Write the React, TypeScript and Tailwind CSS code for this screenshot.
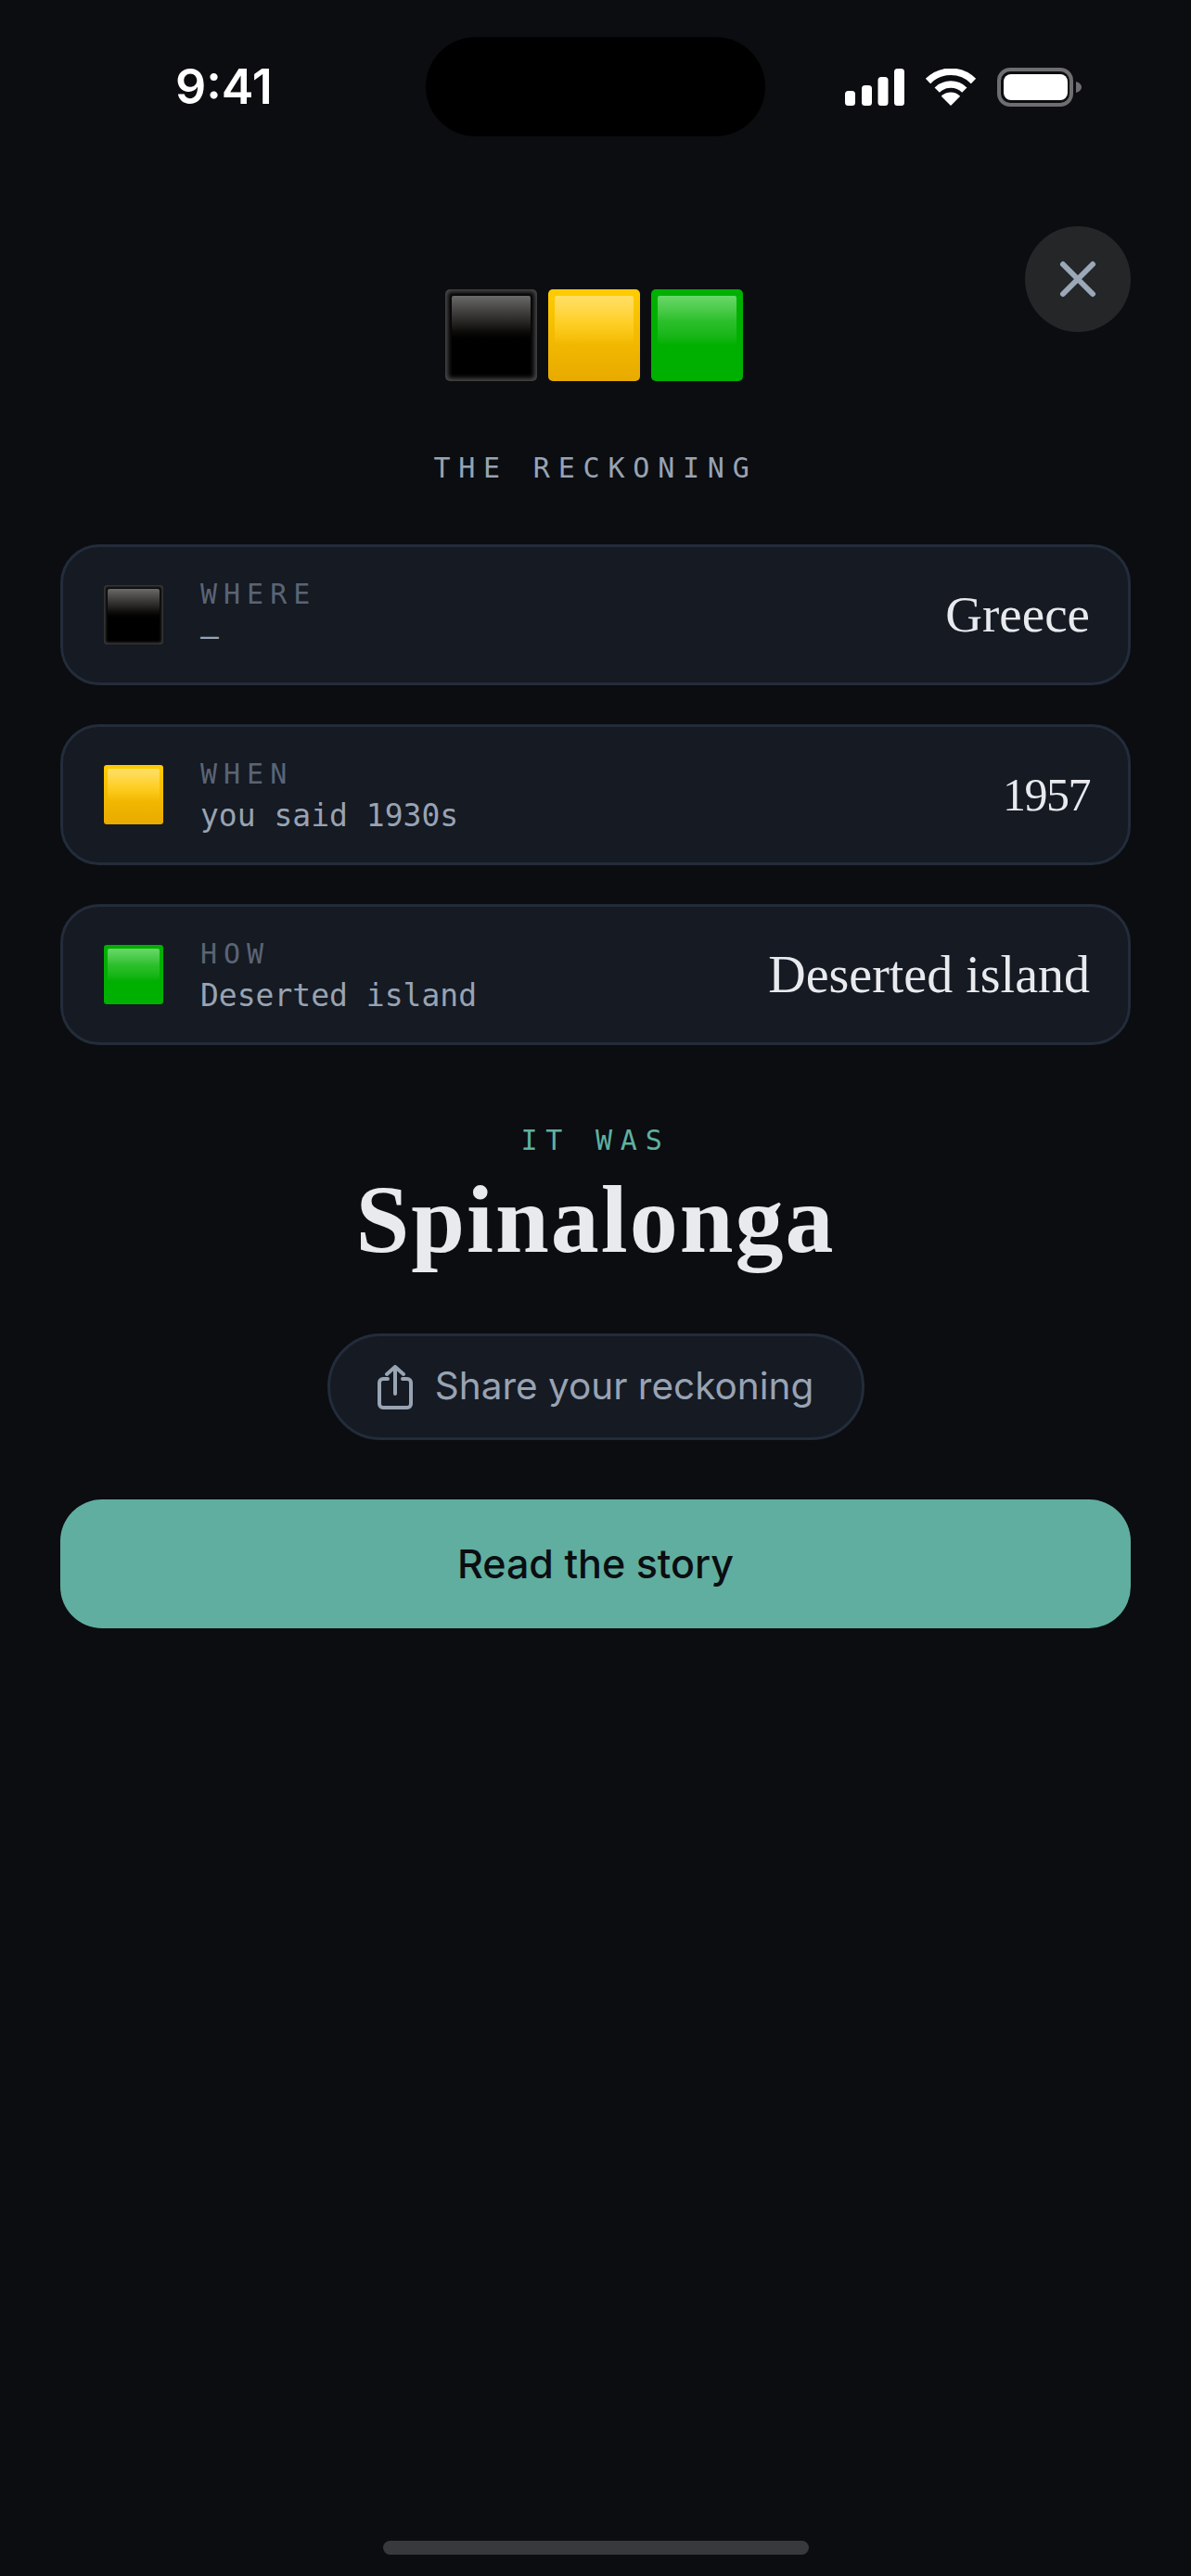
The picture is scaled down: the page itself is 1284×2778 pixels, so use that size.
import React from "react";

const mono = "font-['DejaVu_Sans_Mono',monospace]";
const serif = "font-['Liberation_Serif',serif]";

const rows = [
  { key: "where", label: "WHERE", sub: "—", value: "Greece", tile: "black", size: "text-[55px]" },
  { key: "when", label: "WHEN", sub: "you said 1930s", value: "1957", tile: "yellow", size: "text-[50px] tracking-[-1.500px]" },
  { key: "how", label: "HOW", sub: "Deserted island", value: "Deserted island", tile: "green", size: "text-[56px]" },
];

// emoji-like squares, outer body plus a glossy top
function Tile({ color, small }: { color: string; small?: boolean }) {
  const size = small
    ? "w-[64px] h-[64px] p-[4px] rounded-[3px]"
    : "w-[99px] h-[99px] p-[7px] rounded-[5px]";
  const body =
    color === "black"
      ? small
        ? "bg-black shadow-[inset_0_0_3px_2px_#3c3c3c]"
        : "bg-black shadow-[inset_0_0_5px_3px_#4a4a4a]"
      : color === "yellow"
        ? "bg-gradient-to-b from-[#ffcc00] to-[#e8aa00]"
        : "bg-[#00b000]";
  const gloss =
    color === "black"
      ? "from-[#6a6a6a] via-[#2c2a28] to-black"
      : color === "yellow"
        ? "from-[#ffe064] via-[#ffd02a] to-transparent"
        : "from-[#68d868] via-[#2cc02c] to-[#00b000]";
  return (
    <div className={`${size} ${body} shrink-0`}>
      <div className={`h-[62%] rounded-t-[2px] bg-gradient-to-b ${gloss}`} />
    </div>
  );
}

function StatusIcons() {
  return (
    <div className="flex items-center">
      <svg width="64" height="40" viewBox="0 0 64 40" fill="#fff">
        <rect x="0" y="24" width="11" height="16" rx="3.5" />
        <rect x="18" y="18" width="11" height="22" rx="3.5" />
        <rect x="35.5" y="9" width="11" height="31" rx="3.5" />
        <rect x="53" y="0" width="11" height="40" rx="3.5" />
      </svg>
      <svg className="ml-[22px]" width="56" height="40" viewBox="0 0 56 40" fill="none" stroke="#fff" strokeWidth="7.5">
        <path d="M3.5 13.5a34.6 34.6 0 0 1 49 0" />
        <path d="M13.2 23.2a21 21 0 0 1 29.6 0" />
        <path d="M28 40 17.8 29.8a14.4 14.4 0 0 1 20.4 0Z" fill="#fff" stroke="none" />
      </svg>
      <svg className="ml-[22px]" width="91" height="42" viewBox="0 0 91 42" fill="none">
        <rect x="2" y="2" width="78" height="38" rx="12" stroke="#6e6e70" strokeWidth="4" />
        <rect x="7" y="7" width="69" height="28" rx="8" fill="#fff" />
        <path d="M85 15c3.5 1 6 3.200 6 6s-2.500 5-6 6Z" fill="#6e6e70" />
      </svg>
    </div>
  );
}

export default function App() {
  return (
    <div className="relative flex min-h-[2778px] w-[1284px] flex-col bg-[#0b0d11] font-['Inter',sans-serif]">
      {/* status bar */}
      <div className="flex h-[147px] items-end">
        <div className="flex h-[107px] w-full items-center">
          <div className="w-[459px] pl-[189px] text-[52px] leading-[60px] font-semibold text-white">9:41</div>
          <div className="h-[107px] w-[366px] rounded-[54px] bg-black" />
          <div className="ml-[86px]">
            <StatusIcons />
          </div>
        </div>
      </div>

      <button className="absolute top-[244px] left-[1105px] flex h-[114px] w-[114px] items-center justify-center rounded-full bg-[#252628]">
        <svg width="42" height="42" viewBox="0 0 42 42" fill="none" stroke="#9aa8b8" strokeWidth="6" strokeLinecap="round">
          <path d="M5 5 37 37M37 5 5 37" />
        </svg>
      </button>

      {/* result tiles */}
      <div className="mt-[165px] flex justify-center gap-[12px] pr-[3px]">
        <Tile color="black" />
        <Tile color="yellow" />
        <Tile color="green" />
      </div>

      <div className={`${mono} mt-[74px] text-center text-[30px] leading-[40px] tracking-[8.800px] text-[#98a3b3]`}>
        THE RECKONING
      </div>

      <div className="mx-[65px] mt-[62px] flex flex-col gap-[42px]">
        {rows.map((r) => (
          <div
            key={r.key}
            className="flex h-[152px] items-center rounded-[42px] border-[3px] border-[#232c3a] bg-[#151a23] pr-[41px] pl-[44px]"
          >
            <Tile color={r.tile} small />
            <div className={`${mono} ml-[40px] flex flex-col pt-[1px]`}>
              <span className="text-[30px] leading-[40px] tracking-[7px] text-[#5a6474]">{r.label}</span>
              <span className="mt-[4px] text-[33px] leading-[42px] text-[#98a3b3]">{r.sub}</span>
            </div>
            <div className={`${serif} ${r.size} ml-auto leading-[64px] text-[#e8eaee]`}>{r.value}</div>
          </div>
        ))}
      </div>

      <div className={`${mono} mt-[83px] text-center text-[30px] leading-[40px] tracking-[8.800px] text-[#5fb0a0]`}>
        IT WAS
      </div>
      <div className={`${serif} mt-[10px] text-center text-[104px] leading-[110px] font-bold tracking-[2px] text-[#e8eaee]`}>
        Spinalonga
      </div>

      <div className="mt-[68px] flex justify-center">
        <button className="flex h-[115px] w-[579px] items-center justify-center gap-[24px] rounded-full border-[3px] border-[#232c3a] bg-[#151a23] text-[40.500px] text-[#98a3b3]">
          <svg width="38" height="48" viewBox="0 0 38 48" fill="none" stroke="#98a3b3" strokeWidth="4" strokeLinecap="round" strokeLinejoin="round">
            <path d="M19 2v29M10 10l9-8 9 8" />
            <path d="M11 15H6a4 4 0 0 0-4 4v23a4 4 0 0 0 4 4h26a4 4 0 0 0 4-4V19a4 4 0 0 0-4-4h-5" />
          </svg>
          Share your reckoning
        </button>
      </div>

      <button className="mx-[65px] mt-[64px] h-[139px] rounded-[45px] bg-[#60ae9f] text-[43px] font-medium text-[#0b0d11]">
        Read the story
      </button>

      <div className="absolute top-[2740px] left-[413px] h-[15px] w-[459px] rounded-full bg-[#38393c]" />
    </div>
  );
}
